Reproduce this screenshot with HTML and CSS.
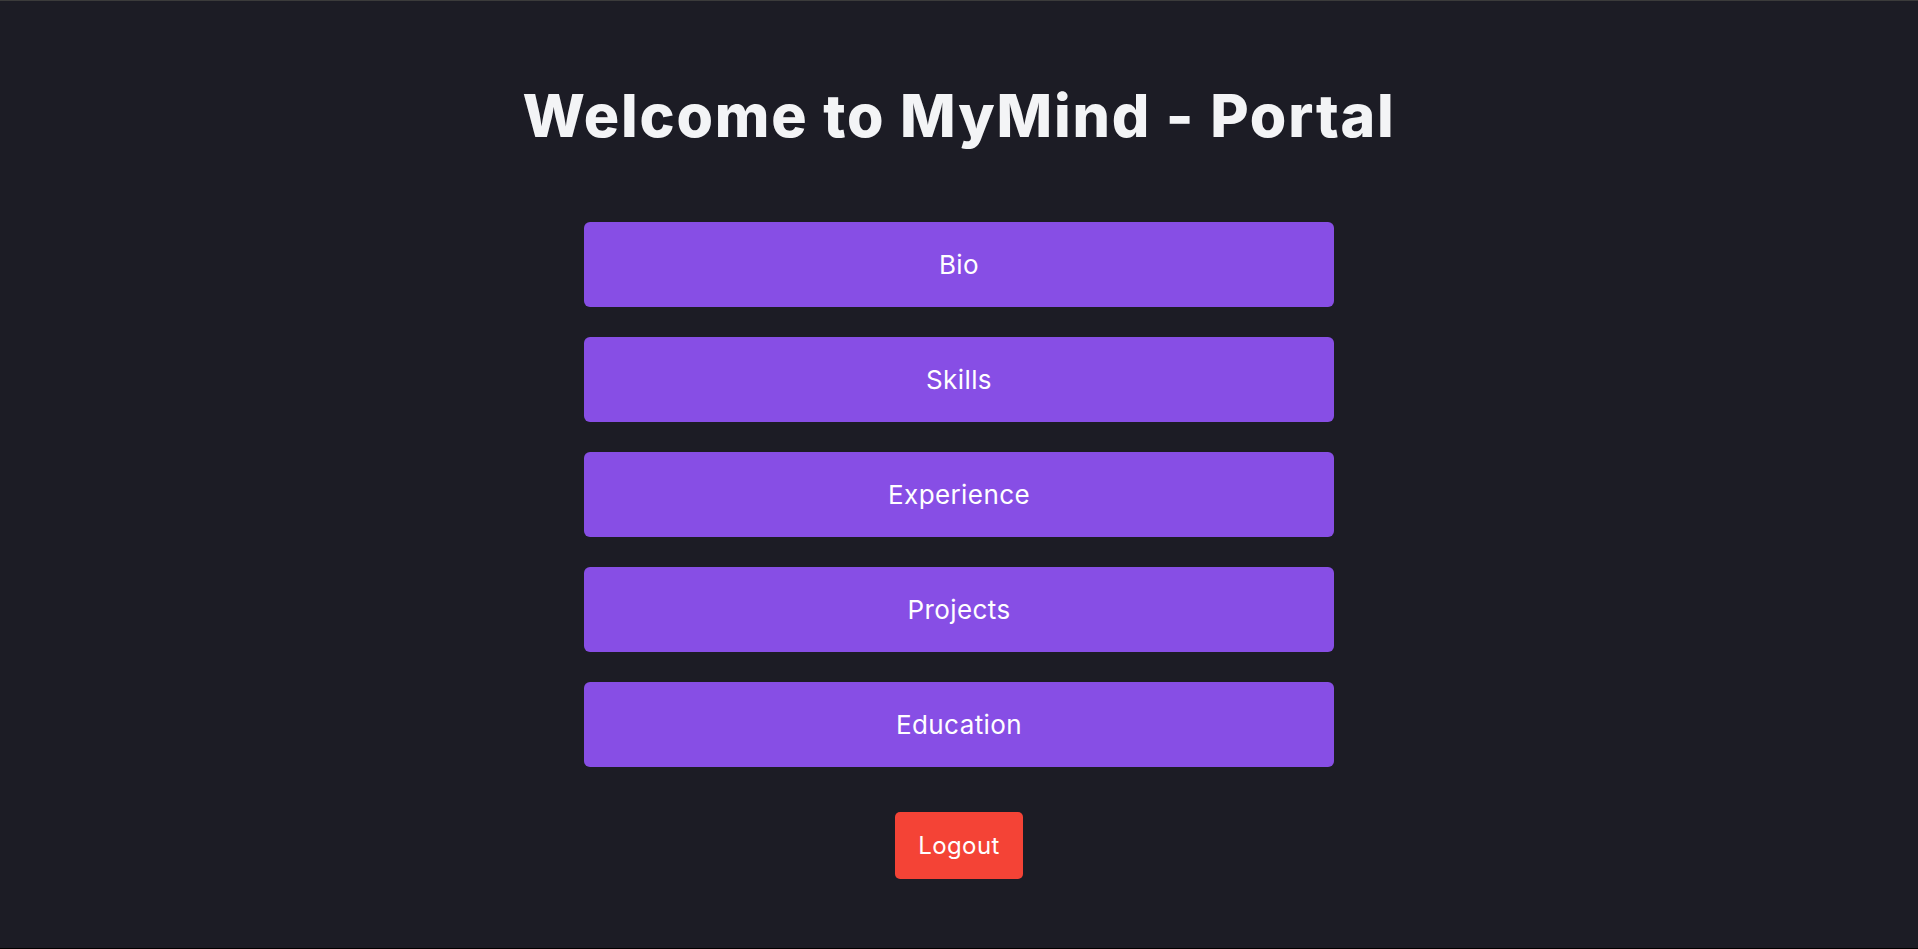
FILE: index.html
```html
<!DOCTYPE html>
<html lang="en">
<head>
<meta charset="utf-8">
<title>MyMind - Portal</title>
<link rel="stylesheet" href="styles.css">
</head>
<body>
<main class="portal">
  <h1 class="title">Welcome to MyMind - Portal</h1>
  <nav class="menu">
    <button class="menu-btn">Bio</button>
    <button class="menu-btn">Skills</button>
    <button class="menu-btn">Experience</button>
    <button class="menu-btn">Projects</button>
    <button class="menu-btn">Education</button>
  </nav>
  <button class="logout">Logout</button>
</main>
</body>
</html>
```
FILE: styles.css
```css
* { box-sizing: border-box; }
html, body { margin: 0; padding: 0; }
body {
  background: #1c1c25;
  font-family: Inter, "Noto Sans", sans-serif;
  height: 949px;
  border-top: 1px solid #3b3b3b;
  border-bottom: 1px solid #000;
  overflow: hidden;
}
.portal {
  display: flex;
  flex-direction: column;
  align-items: center;
  padding-top: 80px;
}
.title {
  margin: 0;
  color: #f3f4f6;
  font-weight: 800;
  font-size: 59px;
  line-height: 70px;
  letter-spacing: 1.8px;
}
.menu {
  display: flex;
  flex-direction: column;
  gap: 30px;
  margin-top: 71px;
}
.menu-btn {
  width: 750px;
  height: 85px;
  border: none;
  border-radius: 6px;
  background: #874ee5;
  color: #ffffff;
  font-family: inherit;
  font-size: 26px;
  font-weight: 400;
  letter-spacing: 0.4px;
  cursor: pointer;
}
.logout {
  margin-top: 45px;
  width: 128px;
  height: 67px;
  border: none;
  border-radius: 5px;
  background: #f44336;
  color: #ffffff;
  font-family: inherit;
  font-size: 24px;
  font-weight: 400;
  letter-spacing: 0.4px;
  cursor: pointer;
}
```
